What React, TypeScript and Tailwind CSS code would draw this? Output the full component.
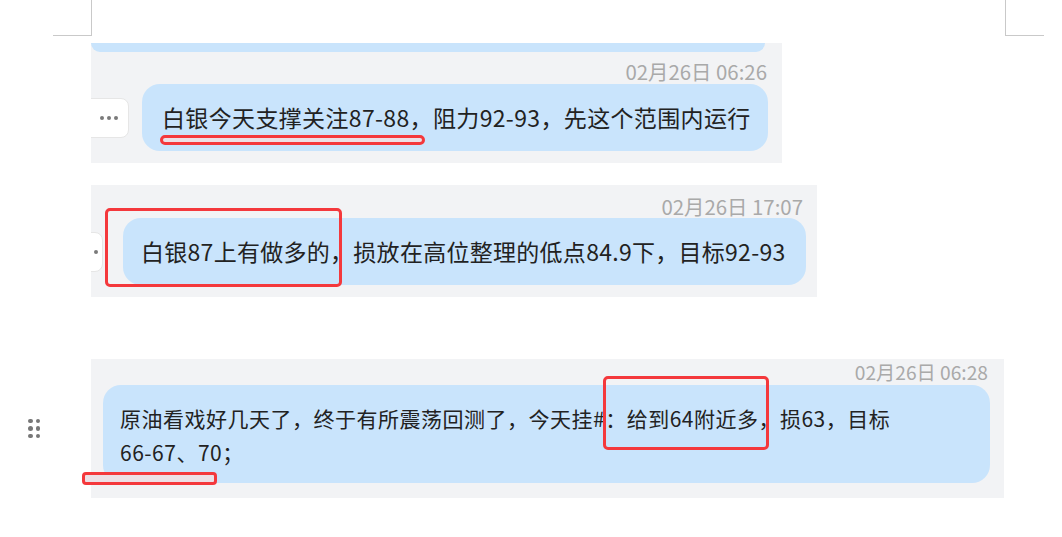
const font = { fontFamily: '"Noto Sans CJK SC", "Noto Sans", sans-serif' };

function MoreButton({ className }: { className: string }) {
  return (
    <div
      className={`flex items-center justify-end gap-[3px] rounded-[8px] border border-[#e6e6e6] bg-white ${className}`}
    >
      <span className="h-[4px] w-[4px] rounded-full bg-[#7a7a7a]" />
      <span className="h-[4px] w-[4px] rounded-full bg-[#7a7a7a]" />
      <span className="h-[4px] w-[4px] rounded-full bg-[#7a7a7a]" />
    </div>
  );
}

function Stamp({ text, className }: { text: string; className: string }) {
  return (
    <div className={`flex justify-end leading-[24px] text-[#a9a9a9] ${className}`}>
      {text}
    </div>
  );
}

function DragHandle() {
  return (
    <div className="grid grid-cols-2 gap-x-[3px] gap-y-[3px]">
      {[0, 1, 2, 3, 4, 5].map((i) => (
        <span key={i} className="h-[4.5px] w-[4.5px] rounded-full bg-[#777]" />
      ))}
    </div>
  );
}

export default function App() {
  return (
    <div className="h-[537px] w-[1062px] overflow-hidden bg-white text-[#222]" style={font}>
      {/* page corner marks */}
      <div className="flex h-[36px]">
        <div className="ml-[53px] h-[36px] w-[39px] border-b border-r border-[#c9c9c9]" />
        <div className="ml-auto mr-[18px] h-[36px] w-[39px] border-b border-l border-[#c9c9c9]" />
      </div>

      {/* block 1 */}
      <div className="ml-[91px] mt-[7px] h-[120px] w-[691px] overflow-hidden bg-[#f2f3f5]">
        <div className="h-[9px] w-[674px] rounded-b-[14px] bg-[#c9e4fc]" />
        <Stamp text="02月26日 06:26" className="mt-[7px] pr-[15px] text-[20.4px]" />
        <div className="mt-[1px] flex items-center">
          <MoreButton className="-ml-[10px] h-[40px] w-[48px] pr-[10px]" />
          <div className="relative ml-[13px] flex h-[67px] w-[626px] items-center whitespace-nowrap rounded-[18px] bg-[#c9e4fc] pl-[20px] text-[23px] tracking-[0.35px]">
            白银今天支撑关注87-88，阻力92-93，先这个范围内运行
            <div className="absolute left-[18px] top-[51px] h-[10px] w-[265px] rounded-full border-[3px] border-[#f4383c] bg-[#ece0e6]" />
          </div>
        </div>
      </div>

      {/* block 2 */}
      <div className="relative ml-[91px] mt-[22px] h-[112px] w-[726px] bg-[#f2f3f5]">
        <div className="h-full w-full overflow-hidden">
          <Stamp text="02月26日 17:07" className="pt-[9px] pr-[14px] text-[20.4px]" />
          <div className="flex items-center">
            <MoreButton className="-ml-[30px] h-[40px] w-[42px] pr-[4px]" />
            <div className="ml-[20px] flex h-[67px] w-[683px] items-center whitespace-nowrap rounded-[18px] bg-[#c9e4fc] pl-[18px] text-[23px] tracking-[0.28px]">
              白银87上有做多的，损放在高位整理的低点84.9下，目标92-93
            </div>
          </div>
        </div>
        <div className="absolute left-[14px] top-[23px] h-[79px] w-[237px] rounded-[5px] border-[3px] border-[#f4383c]" />
      </div>

      {/* block 3 */}
      <div className="relative mt-[62px] flex items-center">
        <div className="flex w-[91px] pl-[28px]">
          <DragHandle />
        </div>
        <div className="h-[139px] w-[913px] bg-[#f2f3f5] pl-[12px] pr-[14px]">
          <Stamp text="02月26日 06:28" className="pt-[1px] pr-[2px] text-[19.2px]" />
          <div className="mt-[1px] h-[98px] w-[887px] rounded-[18px] bg-[#c9e4fc] pl-[17px] pt-[16px] text-[21px] leading-[34px] tracking-[0.5px]">
            原油看戏好几天了，终于有所震荡回测了，今天挂#：给到64附近多，损63，目标
            <br />
            66-67、70；
          </div>
        </div>
        <div className="absolute left-[603px] top-[17px] h-[74px] w-[166px] rounded-[5px] border-[3px] border-[#f4383c]" />
        <div className="absolute left-[82px] top-[113px] h-[13px] w-[135px] rounded-[4px] border-[3px] border-[#f4383c] bg-[#ece0e6]" />
      </div>
    </div>
  );
}
